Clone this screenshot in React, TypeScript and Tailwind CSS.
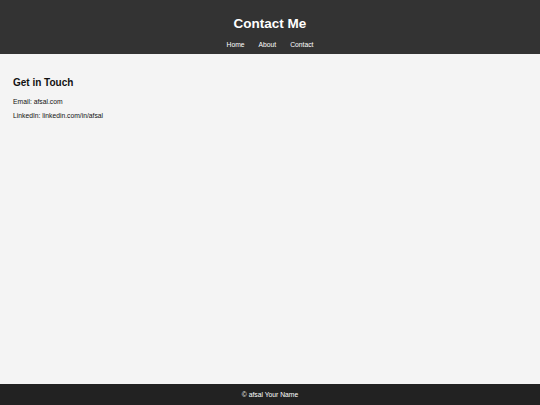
import React from 'react';

const font = { fontFamily: '"Liberation Sans", Arial, sans-serif' };

export default function App() {
  return (
    <div className="flex h-[405px] flex-col bg-[#f4f4f4] text-[6.75px] text-[#111]" style={font}>
      <header className="bg-[#333333] pb-[5px] pt-[16px] text-center text-white">
        <h1 className="text-[13.5px] font-bold leading-[16px]">Contact Me</h1>
        <nav className="mt-[9px] flex justify-center gap-[14px] leading-[8px]">
          <a href="#">Home</a>
          <a href="#">About</a>
          <a href="#">Contact</a>
        </nav>
      </header>

      <main className="flex-1 px-[13px] pt-[23px]">
        <h2 className="text-[10px] font-bold leading-[12px]">Get in Touch</h2>
        <p className="mt-[9px] leading-[8px]">Email: afsal.com</p>
        <p className="mt-[6px] leading-[8px]">LinkedIn: linkedin.com/in/afsal</p>
      </main>

      <footer className="flex h-[21px] items-center justify-center bg-[#222222] pt-[1px] leading-[8px] text-white">
        © afsal Your Name
      </footer>
    </div>
  );
}
